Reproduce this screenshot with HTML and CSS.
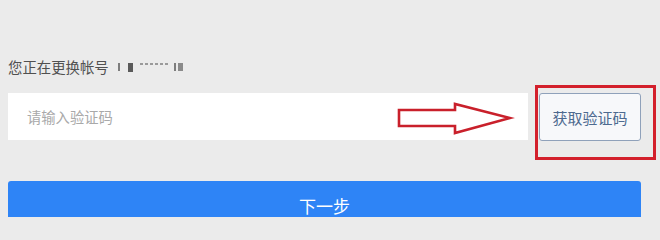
FILE: index.html
```html
<!DOCTYPE html>
<html lang="zh">
<head>
<meta charset="utf-8">
<link rel="stylesheet" href="styles.css">
</head>
<body>
<div class="page">
  <div class="label">您正在更换帐号<span class="mask"><i class="m1"></i><i class="m2"></i><i class="dots"></i><i class="m3"></i><i class="m4"></i></span></div>
  <div class="row">
    <div class="input">请输入验证码</div>
    <div class="btn-wrap">
      <button class="code-btn">获取验证码</button>
      <div class="annot-box"></div>
    </div>
    <svg class="arrow" width="118" height="36" viewBox="0 0 118 36">
      <path d="M2 8 H58 V2 L113 16 L58 31 V24 H2 Z" fill="#ffffff" stroke="#c9202b" stroke-width="2.6" stroke-linejoin="miter"/>
    </svg>
  </div>
  <button class="next">下一步</button>
</div>
</body>
</html>
```
FILE: styles.css
```css
html, body {
  margin: 0;
  padding: 0;
  background: #ebebeb;
  height: 217px;
  overflow: hidden;
}
.page {
  padding: 57px 19px 0 8px;
  font-family: "Noto Sans CJK SC", "Noto Sans", sans-serif;
}
.label {
  font-size: 14.4px;
  line-height: 20px;
  color: #505050;
  display: flex;
  align-items: center;
}
.mask {
  display: inline-flex;
  align-items: center;
  margin-left: 9px;
  height: 20px;
}
.mask i {
  display: inline-block;
  background: #7d7d7d;
}
.m1 { width: 2px; height: 8px; margin-right: 8px; }
.m2 { width: 5px; height: 9px; margin-right: 7px; background: #5a5a5a !important; }
.dots {
  width: 29px;
  height: 2px;
  margin-right: 5px;
  align-self: flex-start;
  margin-top: 6px;
  background: repeating-linear-gradient(90deg, #9a9a9a 0 3px, transparent 3px 5px) !important;
}
.m3 { width: 2px; height: 8px; margin-right: 2px; }
.m4 { width: 5px; height: 8px; background: #8a8a8a !important; }
.row {
  position: relative;
  display: flex;
  gap: 11px;
  margin-top: 16px;
  height: 48px;
}
.input {
  flex: 1;
  height: 47px;
  background: #ffffff;
  font-size: 14.3px;
  color: #a9a9a9;
  display: flex;
  align-items: center;
  padding-left: 19px;
}
.btn-wrap {
  position: relative;
  width: 102px;
}
.code-btn {
  width: 102px;
  height: 48px;
  box-sizing: border-box;
  border: 1px solid #8fa1ba;
  border-radius: 3px;
  background: #f7f8fa;
  color: #4d6a8f;
  font-family: "Noto Sans CJK SC", "Noto Sans", sans-serif;
  font-size: 15px;
  padding: 0;
}
.annot-box {
  position: absolute;
  left: -4px;
  top: -8px;
  width: 121px;
  height: 75px;
  box-sizing: border-box;
  border: 3px solid #d3202c;
}
.arrow {
  position: absolute;
  left: 389px;
  top: 9px;
}
.next {
  display: block;
  width: 100%;
  margin-top: 40px;
  height: 44px;
  border: none;
  border-radius: 3px 3px 0 0;
  background: #2e84f6;
  color: #ffffff;
  font-family: "Noto Sans CJK SC", "Noto Sans", sans-serif;
  font-size: 17px;
  padding: 0;
  line-height: 50px;
}
```
